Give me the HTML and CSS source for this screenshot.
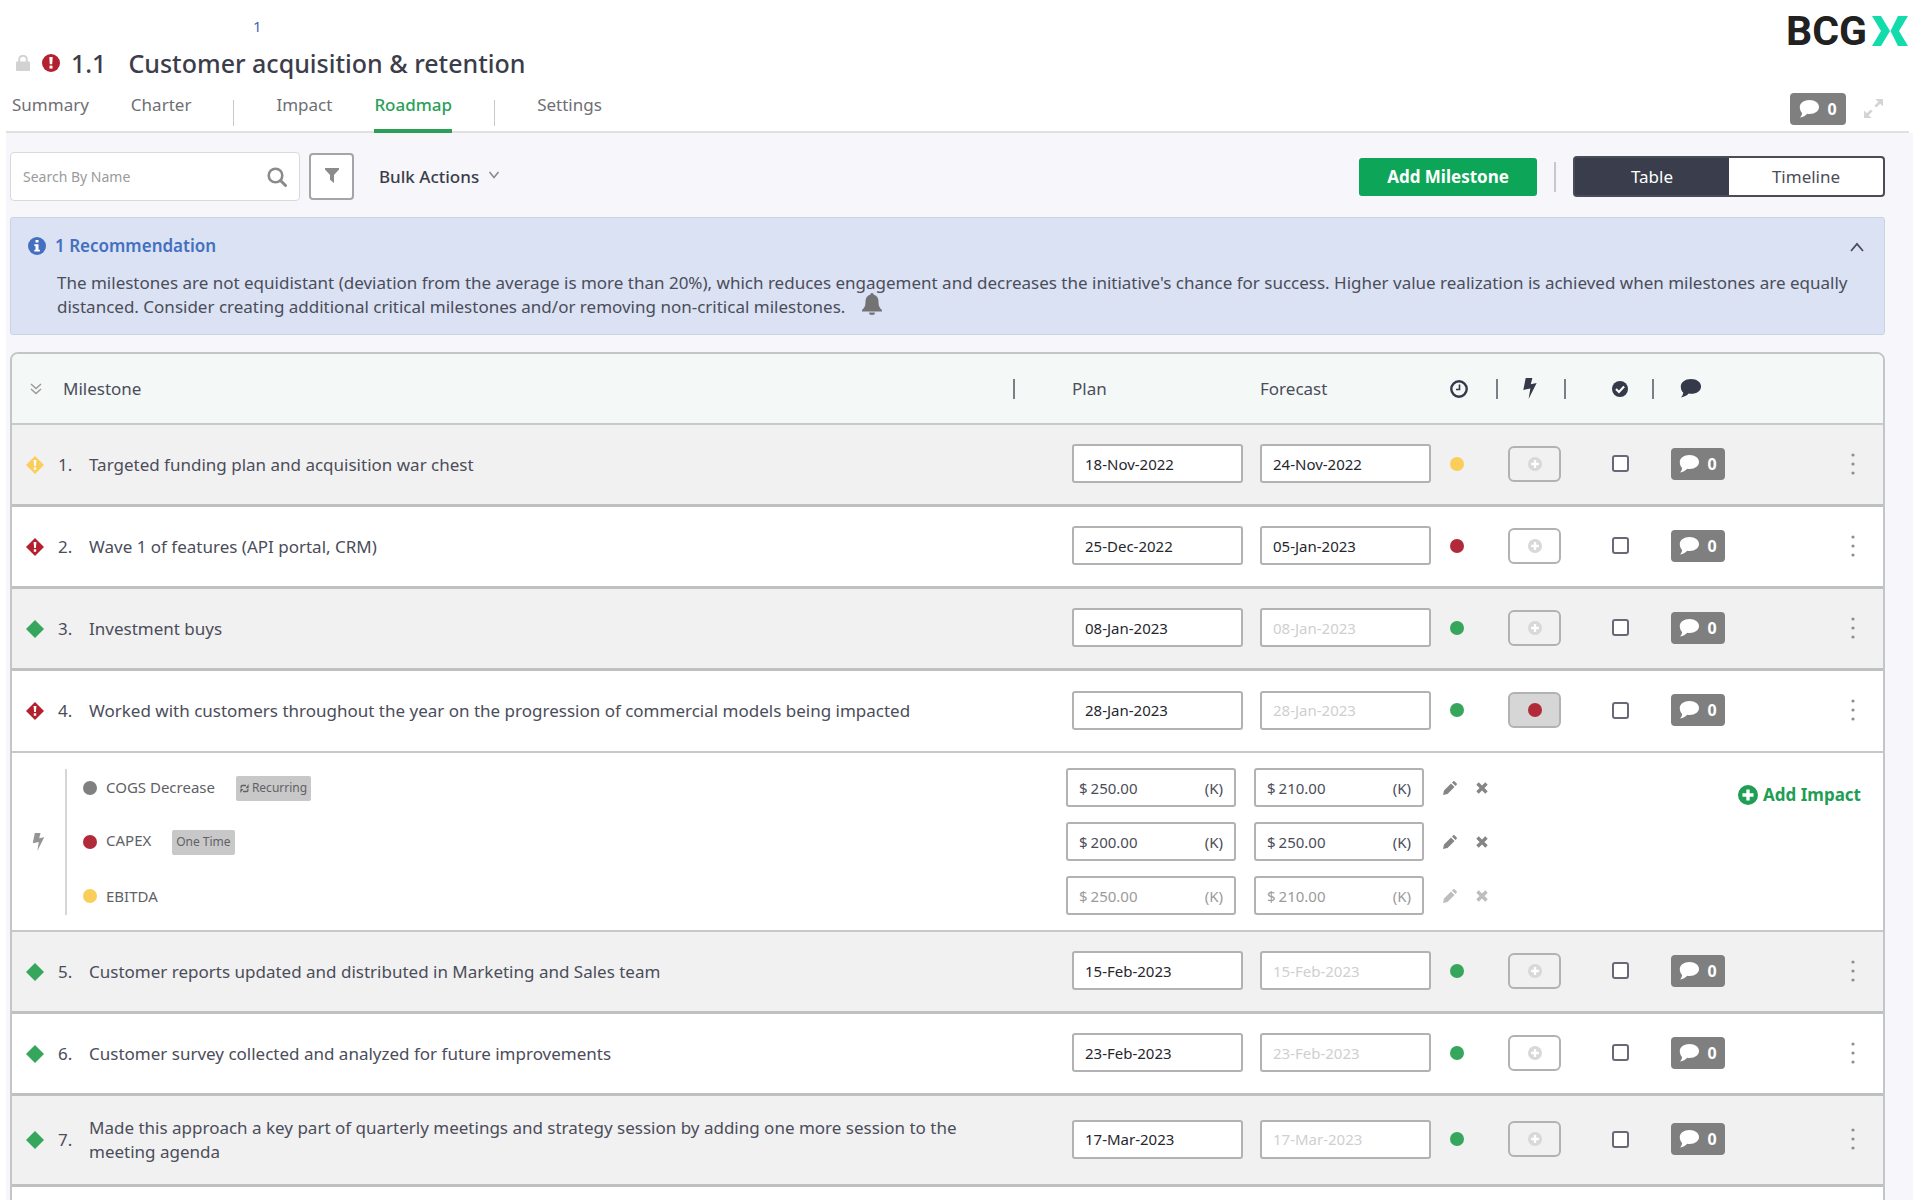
FILE: index.html
```html
<!DOCTYPE html>
<html lang="en">
<head>
    <meta charset="UTF-8">
    <meta name="viewport" content="width=device-width, initial-scale=1.0">
    <title>Customer acquisition &amp; retention</title>
    <link rel="stylesheet" href="styles.css">
</head>
<body>
    <svg class="sprite" aria-hidden="true">
        <symbol id="i-lock" viewBox="0 0 14 16"><path d="M3.200 7V4.500a3.800 3.800 0 0 1 7.600 0V7" fill="none" stroke="currentColor" stroke-width="2"/><rect x="0" y="6.500" width="14" height="9.500" rx="1"/></symbol>
        <symbol id="i-alert" viewBox="0 0 18 18"><circle cx="9" cy="9" r="9"/><path d="M7.300 3h3.400l-.5 7.200H7.800z" fill="#fff"/><rect x="7.500" y="11.600" width="3" height="3" fill="#fff"/></symbol>
        <symbol id="i-search" viewBox="0 0 20 20"><circle cx="8.500" cy="8.500" r="6.800" fill="none" stroke="currentColor" stroke-width="2.600"/><path d="M13.500 13.500l5 5" stroke="currentColor" stroke-width="3" stroke-linecap="round"/></symbol>
        <symbol id="i-filter" viewBox="0 0 14 15"><path d="M0 0h14v1.500L9 7v8l-4-3.200V7L0 1.500z"/></symbol>
        <symbol id="i-down" viewBox="0 0 12 8"><path d="M1.500 1L6 6.500 10.500 1" fill="none" stroke="currentColor" stroke-width="1.600"/></symbol>
        <symbol id="i-up" viewBox="0 0 14 10"><path d="M1 9l6-7 6 7" fill="none" stroke="currentColor" stroke-width="1.800"/></symbol>
        <symbol id="i-double" viewBox="0 0 12 12"><path d="M1 1l5 4.500L11 1M1 6l5 4.500L11 6" fill="none" stroke="currentColor" stroke-width="1.500"/></symbol>
        <symbol id="i-info" viewBox="0 0 18 18"><circle cx="9" cy="9" r="9"/><path d="M7.500 3h3v2.600h-3zM6.300 7.200h4.200v5.600h1.400v1.700H6.300v-1.700h1.200V8.900H6.300z" fill="#fff"/></symbol>
        <symbol id="i-bell" viewBox="0 0 20 22"><path d="M10 0a1.500 1.500 0 0 1 1.500 1.600C14.700 2.300 16.500 5 16.500 8.500c0 4.500 1.200 6.500 3.500 8.500v1.500H0V17c2.300-2 3.500-4 3.500-8.500C3.500 5 5.300 2.300 8.500 1.600A1.500 1.500 0 0 1 10 0zM7 19.500h6a3 2.500 0 0 1-6 0z"/></symbol>
        <symbol id="i-chat" viewBox="0 0 20 18"><path d="M10.500 0C16 0 20 3.100 20 7s-4 7-9.500 7c-.8 0-1.500-.1-2.200-.2C6.500 15.700 4 17 1 17.500c1.200-1.300 2-2.700 2.100-4.600C1.500 11.500.8 9.400.8 7c0-3.900 4.200-7 9.700-7z"/></symbol>
        <symbol id="i-expand" viewBox="0 0 20 20"><path d="M12 0h8v8l-3-3-4 4-2-2 4-4zM8 20H0v-8l3 3 4-4 2 2-4 4z"/></symbol>
        <symbol id="i-clock" viewBox="0 0 18 18"><circle cx="9" cy="9" r="7.700" fill="none" stroke="currentColor" stroke-width="2.400"/><path d="M9.500 4.500v5H6" fill="none" stroke="currentColor" stroke-width="1.600"/></symbol>
        <symbol id="i-bolt" viewBox="0 0 14 22"><path d="M2.500 0h7L7.800 6.500 14 5.300 5.500 22l1.900-11L0 12.500z"/></symbol>
        <symbol id="i-check" viewBox="0 0 18 18"><circle cx="9" cy="9" r="9"/><path d="M4.500 9l3.300 3.300 5.800-6" fill="none" stroke="#fff" stroke-width="2.400"/></symbol>
        <symbol id="i-plus" viewBox="0 0 18 18"><circle cx="9" cy="9" r="9"/><path d="M9 4v10M4 9h10" stroke="#fff" stroke-width="3"/></symbol>
        <symbol id="i-diamond" viewBox="0 0 18 18"><path d="M9 0l9 9-9 9-9-9z"/></symbol>
        <symbol id="i-diamond-alert" viewBox="0 0 18 18"><path d="M9 0l9 9-9 9-9-9z"/><path d="M7.600 4h2.800l-.5 6H8.100zM7.800 11.300h2.400v2.400H7.800z" fill="#fff"/></symbol>
        <symbol id="i-refresh" viewBox="0 0 12 12"><path d="M1.500 5.500V3.500Q1.500 2 3 2h5M10.500 6.500v2q0 1.500-1.500 1.500H4" fill="none" stroke="currentColor" stroke-width="1.700"/><path d="M7.500 5.500L11.500 0v5.500zM4.500 6.500L.5 12V6.500z"/></symbol>
        <symbol id="i-pencil" viewBox="0 0 14 14"><path d="M0 14l1-4.500L8 2.500 11.500 6l-7 7zM9 1.500L10.300.2q.6-.4 1.200.1L13.700 2.500q.5.600 0 1.200L12.500 5z"/></symbol>
        <symbol id="i-times" viewBox="0 0 12 12"><path d="M1.500 1.500l9 9M10.500 1.500l-9 9" stroke="currentColor" stroke-width="3.400"/></symbol>
        <symbol id="i-dots" viewBox="0 0 4 22"><circle cx="2" cy="2" r="1.600"/><circle cx="2" cy="11" r="1.600"/><circle cx="2" cy="20" r="1.600"/></symbol>
    </svg>

    <header class="topbar">
        <div class="heading">
            <a class="parent-link" href="#">1</a>
            <h1>
                <svg class="icon-lock"><use href="#i-lock"/></svg>
                <svg class="icon-18 red"><use href="#i-alert"/></svg>
                <span class="code">1.1</span>
                <span>Customer acquisition &amp; retention</span>
            </h1>
        </div>
        <div class="logo">
            <span>BCG</span>
            <svg viewBox="0 0 36 30"><path d="M0 0h9l9 15-9 15H0l9-15zM36 0H26l-7.500 15L26 30h10l-9-15z"/></svg>
        </div>
    </header>

    <nav class="tabs">
        <a href="#">Summary</a>
        <a href="#">Charter</a>
        <span class="tab-sep"></span>
        <a href="#">Impact</a>
        <a class="active" href="#">Roadmap</a>
        <span class="tab-sep"></span>
        <a href="#">Settings</a>
        <div class="tabs-right">
            <button type="button" class="badge badge-lg"><svg><use href="#i-chat"/></svg>0</button>
            <button type="button" class="plain expand" aria-label="Expand"><svg><use href="#i-expand"/></svg></button>
        </div>
    </nav>

    <main>
        <div class="toolbar">
            <label class="search">
                <input type="text" placeholder="Search By Name" aria-label="Search By Name">
                <svg><use href="#i-search"/></svg>
            </label>
            <button type="button" class="filter" aria-label="Filter"><svg><use href="#i-filter"/></svg></button>
            <button type="button" class="plain bulk">Bulk Actions <svg><use href="#i-down"/></svg></button>
            <button type="button" class="add-milestone">Add Milestone</button>
            <span class="tool-sep"></span>
            <div class="toggle">
                <button type="button" class="on">Table</button>
                <button type="button">Timeline</button>
            </div>
        </div>

        <section class="recommendation">
            <h2>
                <svg class="icon-18"><use href="#i-info"/></svg>
                1 Recommendation
                <button type="button" class="plain collapse" aria-label="Collapse"><svg><use href="#i-up"/></svg></button>
            </h2>
            <p>The milestones are not equidistant (deviation from the average is more than 20%), which reduces engagement and decreases the initiative's chance for success. Higher value realization is achieved when milestones are equally distanced. Consider creating additional critical milestones and/or removing non-critical milestones. <svg class="bell"><use href="#i-bell"/></svg></p>
        </section>

        <div class="table-box">
            <table>
                <colgroup>
                    <col>
                    <col class="c-plan">
                    <col class="c-forecast">
                    <col class="c-status">
                    <col class="c-impact">
                    <col class="c-done">
                    <col class="c-comments">
                    <col class="c-menu">
                </colgroup>
                <thead>
                    <tr>
                        <th class="sep"><div class="name head"><svg class="double"><use href="#i-double"/></svg><span>Milestone</span></div></th>
                        <th class="plan">Plan</th>
                        <th class="forecast">Forecast</th>
                        <th class="status sep"><svg class="icon-18"><use href="#i-clock"/></svg></th>
                        <th class="impact sep"><svg class="icon-bolt"><use href="#i-bolt"/></svg></th>
                        <th class="done sep"><svg class="icon-16"><use href="#i-check"/></svg></th>
                        <th class="comments"><svg class="icon-chat"><use href="#i-chat"/></svg></th>
                        <th></th>
                    </tr>
                </thead>
                <tbody>
                    <tr class="shade">
                        <td><div class="name"><svg class="diamond yellow"><use href="#i-diamond-alert"/></svg><span class="num">1.</span><span>Targeted funding plan and acquisition war chest</span></div></td>
                        <td class="plan"><input class="date" type="text" value="18-Nov-2022" aria-label="Plan 1"></td>
                        <td class="forecast"><input class="date" type="text" value="24-Nov-2022" aria-label="Forecast 1"></td>
                        <td class="status"><span class="dot bg-yellow"></span></td>
                        <td class="impact"><button type="button" class="add" aria-label="Add impact"><svg><use href="#i-plus"/></svg></button></td>
                        <td class="done"><input type="checkbox" aria-label="Done 1"></td>
                        <td class="comments"><button type="button" class="badge"><svg><use href="#i-chat"/></svg>0</button></td>
                        <td class="menu"><button type="button" class="plain" aria-label="Menu"><svg><use href="#i-dots"/></svg></button></td>
                    </tr>
                    <tr>
                        <td><div class="name"><svg class="diamond red"><use href="#i-diamond-alert"/></svg><span class="num">2.</span><span>Wave 1 of features (API portal, CRM)</span></div></td>
                        <td class="plan"><input class="date" type="text" value="25-Dec-2022" aria-label="Plan 2"></td>
                        <td class="forecast"><input class="date" type="text" value="05-Jan-2023" aria-label="Forecast 2"></td>
                        <td class="status"><span class="dot bg-red"></span></td>
                        <td class="impact"><button type="button" class="add" aria-label="Add impact"><svg><use href="#i-plus"/></svg></button></td>
                        <td class="done"><input type="checkbox" aria-label="Done 2"></td>
                        <td class="comments"><button type="button" class="badge"><svg><use href="#i-chat"/></svg>0</button></td>
                        <td class="menu"><button type="button" class="plain" aria-label="Menu"><svg><use href="#i-dots"/></svg></button></td>
                    </tr>
                    <tr class="shade">
                        <td><div class="name"><svg class="diamond green"><use href="#i-diamond"/></svg><span class="num">3.</span><span>Investment buys</span></div></td>
                        <td class="plan"><input class="date" type="text" value="08-Jan-2023" aria-label="Plan 3"></td>
                        <td class="forecast"><input class="date" type="text" placeholder="08-Jan-2023" aria-label="Forecast 3"></td>
                        <td class="status"><span class="dot bg-green"></span></td>
                        <td class="impact"><button type="button" class="add" aria-label="Add impact"><svg><use href="#i-plus"/></svg></button></td>
                        <td class="done"><input type="checkbox" aria-label="Done 3"></td>
                        <td class="comments"><button type="button" class="badge"><svg><use href="#i-chat"/></svg>0</button></td>
                        <td class="menu"><button type="button" class="plain" aria-label="Menu"><svg><use href="#i-dots"/></svg></button></td>
                    </tr>
                    <tr class="open">
                        <td><div class="name"><svg class="diamond red"><use href="#i-diamond-alert"/></svg><span class="num">4.</span><span>Worked with customers throughout the year on the progression of commercial models being impacted</span></div></td>
                        <td class="plan"><input class="date" type="text" value="28-Jan-2023" aria-label="Plan 4"></td>
                        <td class="forecast"><input class="date" type="text" placeholder="28-Jan-2023" aria-label="Forecast 4"></td>
                        <td class="status"><span class="dot bg-green"></span></td>
                        <td class="impact"><button type="button" class="add pressed" aria-label="Hide impacts"><span class="dot bg-red"></span></button></td>
                        <td class="done"><input type="checkbox" aria-label="Done 4"></td>
                        <td class="comments"><button type="button" class="badge"><svg><use href="#i-chat"/></svg>0</button></td>
                        <td class="menu"><button type="button" class="plain" aria-label="Menu"><svg><use href="#i-dots"/></svg></button></td>
                    </tr>
                    <tr class="details">
                        <td colspan="8">
                            <div class="impacts">
                                <svg class="impacts-icon"><use href="#i-bolt"/></svg>
                                <div class="impact-list">
                                    <div class="impact-row">
                                        <span class="dot bg-gray"></span>
                                        <span class="impact-name">COGS Decrease <span class="tag"><svg><use href="#i-refresh"/></svg>Recurring</span></span>
                                        <label class="money">$ <input type="text" value="250.00" aria-label="COGS plan">(K)</label>
                                        <label class="money">$ <input type="text" value="210.00" aria-label="COGS forecast">(K)</label>
                                        <button type="button" class="plain tool" aria-label="Edit"><svg><use href="#i-pencil"/></svg></button>
                                        <button type="button" class="plain tool" aria-label="Remove"><svg class="times"><use href="#i-times"/></svg></button>
                                    </div>
                                    <div class="impact-row">
                                        <span class="dot bg-red"></span>
                                        <span class="impact-name">CAPEX <span class="tag">One Time</span></span>
                                        <label class="money">$ <input type="text" value="200.00" aria-label="CAPEX plan">(K)</label>
                                        <label class="money">$ <input type="text" value="250.00" aria-label="CAPEX forecast">(K)</label>
                                        <button type="button" class="plain tool" aria-label="Edit"><svg><use href="#i-pencil"/></svg></button>
                                        <button type="button" class="plain tool" aria-label="Remove"><svg class="times"><use href="#i-times"/></svg></button>
                                    </div>
                                    <div class="impact-row muted">
                                        <span class="dot bg-yellow"></span>
                                        <span class="impact-name">EBITDA</span>
                                        <label class="money">$ <input type="text" value="250.00" aria-label="EBITDA plan">(K)</label>
                                        <label class="money">$ <input type="text" value="210.00" aria-label="EBITDA forecast">(K)</label>
                                        <button type="button" class="plain tool" aria-label="Edit"><svg><use href="#i-pencil"/></svg></button>
                                        <button type="button" class="plain tool" aria-label="Remove"><svg class="times"><use href="#i-times"/></svg></button>
                                    </div>
                                </div>
                                <button type="button" class="plain add-impact"><svg><use href="#i-plus"/></svg>Add Impact</button>
                            </div>
                        </td>
                    </tr>
                    <tr class="shade">
                        <td><div class="name"><svg class="diamond green"><use href="#i-diamond"/></svg><span class="num">5.</span><span>Customer reports updated and distributed in Marketing and Sales team</span></div></td>
                        <td class="plan"><input class="date" type="text" value="15-Feb-2023" aria-label="Plan 5"></td>
                        <td class="forecast"><input class="date" type="text" placeholder="15-Feb-2023" aria-label="Forecast 5"></td>
                        <td class="status"><span class="dot bg-green"></span></td>
                        <td class="impact"><button type="button" class="add" aria-label="Add impact"><svg><use href="#i-plus"/></svg></button></td>
                        <td class="done"><input type="checkbox" aria-label="Done 5"></td>
                        <td class="comments"><button type="button" class="badge"><svg><use href="#i-chat"/></svg>0</button></td>
                        <td class="menu"><button type="button" class="plain" aria-label="Menu"><svg><use href="#i-dots"/></svg></button></td>
                    </tr>
                    <tr>
                        <td><div class="name"><svg class="diamond green"><use href="#i-diamond"/></svg><span class="num">6.</span><span>Customer survey collected and analyzed for future improvements</span></div></td>
                        <td class="plan"><input class="date" type="text" value="23-Feb-2023" aria-label="Plan 6"></td>
                        <td class="forecast"><input class="date" type="text" placeholder="23-Feb-2023" aria-label="Forecast 6"></td>
                        <td class="status"><span class="dot bg-green"></span></td>
                        <td class="impact"><button type="button" class="add" aria-label="Add impact"><svg><use href="#i-plus"/></svg></button></td>
                        <td class="done"><input type="checkbox" aria-label="Done 6"></td>
                        <td class="comments"><button type="button" class="badge"><svg><use href="#i-chat"/></svg>0</button></td>
                        <td class="menu"><button type="button" class="plain" aria-label="Menu"><svg><use href="#i-dots"/></svg></button></td>
                    </tr>
                    <tr class="shade">
                        <td><div class="name"><svg class="diamond green"><use href="#i-diamond"/></svg><span class="num">7.</span><span>Made this approach a key part of quarterly meetings and strategy session by adding one more session to the meeting agenda</span></div></td>
                        <td class="plan"><input class="date" type="text" value="17-Mar-2023" aria-label="Plan 7"></td>
                        <td class="forecast"><input class="date" type="text" placeholder="17-Mar-2023" aria-label="Forecast 7"></td>
                        <td class="status"><span class="dot bg-green"></span></td>
                        <td class="impact"><button type="button" class="add" aria-label="Add impact"><svg><use href="#i-plus"/></svg></button></td>
                        <td class="done"><input type="checkbox" aria-label="Done 7"></td>
                        <td class="comments"><button type="button" class="badge"><svg><use href="#i-chat"/></svg>0</button></td>
                        <td class="menu"><button type="button" class="plain" aria-label="Menu"><svg><use href="#i-dots"/></svg></button></td>
                    </tr>
                    <tr class="blank"><td colspan="8"></td></tr>
                </tbody>
            </table>
        </div>
    </main>
</body>
</html>
```
FILE: styles.css
```css
* {
    box-sizing: border-box;
}
body {
    display: flex;
    flex-direction: column;
    margin: 0;
    height: 100vh;
    overflow: hidden;
    background: #fff;
    color: #4b4d5a;
    font-family: "Noto Sans", "Open Sans", sans-serif;
    font-size: 17px;
    line-height: 24px;
}
button, input {
    font: inherit;
    color: inherit;
}
button {
    padding: 0;
    cursor: pointer;
}
a {
    color: inherit;
    text-decoration: none;
}
svg {
    fill: currentColor;
    flex: none;
}
.sprite {
    display: none;
}
.plain {
    border: 0;
    background: none;
}
.icon-18 {
    width: 18px;
    height: 18px;
}
.icon-16 {
    width: 16px;
    height: 16px;
}
.red { color: #b3202e; }
.green { color: #35a65c; }
.yellow { color: #fbcd5b; }
.bg-red { background: #b02a3a; }
.bg-green { background: #35a65c; }
.bg-yellow { background: #fbcd5b; }
.bg-gray { background: #808080; }

/* header */
.topbar {
    display: flex;
    flex: none;
    justify-content: space-between;
    padding: 14px 14px 0 15px;
    height: 86px;
}
.parent-link {
    display: block;
    padding-left: 238px;
    font-size: 15px;
    color: #3f68b5;
}
h1 {
    display: flex;
    align-items: center;
    gap: 11px;
    margin: 9px 0 0;
    font-size: 25px;
    line-height: 32px;
    font-weight: 500;
    color: #3b3d4a;
}
.code {
    margin-right: 11px;
}
.icon-lock {
    width: 16px;
    height: 16px;
    color: #d2d2d2;
}
.logo {
    display: flex;
    align-items: center;
    gap: 5px;
    height: 34px;
    font-family: Roboto, sans-serif;
    font-size: 41px;
    font-weight: 700;
    color: #212121;
}
.logo svg {
    width: 36px;
    height: 30px;
    color: #12dcab;
}

/* tabs */
.tabs {
    display: flex;
    flex: none;
    gap: 42px;
    height: 47px;
    margin: 0 13px 0 6px;
    padding: 0 26px 0 6px;
    border-bottom: 2px solid #dfe1e1;
    color: #6e6f74;
}
.tabs a {
    height: 47px;
    padding-top: 7px;
}
.tabs .active {
    color: #2b9f57;
    font-weight: 500;
    border-bottom: 4px solid #2b9f57;
}
.tab-sep {
    width: 1px;
    height: 26px;
    margin-top: 14px;
    background: #c8c8c8;
}
.tabs-right {
    display: flex;
    align-items: center;
    gap: 18px;
    margin-left: auto;
}
.badge {
    display: inline-flex;
    align-items: center;
    justify-content: center;
    gap: 8px;
    width: 54px;
    height: 32px;
    border: 0;
    border-radius: 4px;
    background: #7f7f7f;
    color: #fff;
    font-size: 16px;
    font-weight: 700;
}
.badge svg {
    width: 20px;
    height: 18px;
}
.badge-lg {
    width: 56px;
}
.expand svg {
    display: block;
    width: 19px;
    height: 19px;
    color: #d4d4d4;
}

/* content */
main {
    flex: 1;
    min-height: 0;
    overflow: hidden;
    margin: 0 9px 0 6px;
    padding: 19px 28px 0 4px;
    background: #f6f6fb;
}
.toolbar {
    display: flex;
    align-items: center;
    height: 49px;
}
.search {
    display: flex;
    align-items: center;
    width: 290px;
    height: 49px;
    padding: 0 12px;
    border: 1px solid #d9d9dc;
    border-radius: 4px;
    background: #fff;
    color: #8b8b8b;
    font-size: 14px;
}
.search input {
    flex: 1;
    min-width: 0;
    padding: 0;
    border: 0;
    outline: 0;
    background: none;
}
.search input::placeholder {
    color: #9b9b9b;
}
.search svg {
    width: 20px;
    height: 20px;
}
.filter {
    width: 45px;
    height: 47px;
    margin-left: 9px;
    border: 2px solid #a5a5a8;
    border-radius: 4px;
    background: #fff;
    color: #8b8b8b;
}
.filter svg {
    width: 14px;
    height: 15px;
}
.bulk {
    margin-left: 25px;
    color: #3b3d4a;
    font-weight: 500;
}
.bulk svg {
    width: 12px;
    height: 8px;
    margin: 0 0 4px 4px;
    color: #8b8b8b;
}
.add-milestone {
    width: 178px;
    height: 38px;
    margin-left: auto;
    border: 0;
    border-radius: 3px;
    background: #0da658;
    color: #fff;
    font-weight: 700;
}
.tool-sep {
    width: 2px;
    height: 30px;
    margin: 0 17px;
    background: #c8c8c8;
}
.toggle {
    display: flex;
    width: 312px;
    height: 41px;
    border: 2px solid #4a4c58;
    border-radius: 4px;
    background: #fff;
}
.toggle button {
    flex: 1;
    border: 0;
    background: none;
}
.toggle .on {
    background: #393d4c;
    color: #fff;
}
.recommendation {
    margin-top: 16px;
    padding: 16px 2px 15px 17px;
    border: 1px solid #c9d3e6;
    border-radius: 3px;
    background: #dae2f3;
}
.recommendation h2 {
    display: flex;
    align-items: center;
    gap: 9px;
    margin: 0;
    font-size: 17px;
    font-weight: 600;
    color: #4470bf;
}
.collapse {
    margin-left: auto;
    margin-right: 18px;
    color: #4b4d5a;
}
.collapse svg {
    width: 14px;
    height: 10px;
}
.recommendation p {
    margin: 13px 0 0;
    padding-left: 29px;
}
.bell {
    width: 20px;
    height: 22px;
    margin: -6px 0 0 12px;
    vertical-align: -2px;
    color: #737373;
}

/* milestones */
.table-box {
    margin-top: 17px;
    border: 2px solid #c3c6c6;
    border-radius: 8px 8px 0 0;
    overflow: hidden;
    background: #fff;
}
table {
    width: 100%;
    table-layout: fixed;
    border-collapse: separate;
    border-spacing: 0;
}
.c-plan { width: 229px; }
.c-forecast { width: 188px; }
.c-status { width: 66px; }
.c-impact { width: 68px; }
.c-done { width: 88px; }
.c-comments { width: 86px; }
.c-menu { width: 143px; }
th {
    height: 71px;
    padding: 0;
    border-bottom: 2px solid #c8cbcb;
    background: #f4f8f7;
    font-weight: 400;
    text-align: left;
}
th svg {
    display: block;
    color: #353a4a;
}
.sep {
    background-image: linear-gradient(#7d7f86, #7d7f86);
    background-repeat: no-repeat;
    background-position: right center;
    background-size: 2px 20px;
}
td {
    height: 82px;
    padding: 0 0 2px;
    border-bottom: 3px solid #bfc1c1;
    text-align: left;
}
td:first-child {
    padding-bottom: 0;
}
.plan { padding-left: 57px; }
.forecast { padding-left: 16px; }
.status { padding-left: 18px; }
td.impact { padding-left: 10px; }
th.impact { padding-left: 25px; }
.done { padding-left: 46px; }
td.comments { padding-left: 17px; }
th.comments { padding-left: 25px; }
.shade td {
    background: #f1f1f1;
}
.open td {
    border-bottom: 2px solid #c8c8c8;
}
.details td {
    height: 179px;
    border-bottom: 2px solid #c8c8c8;
}
.blank td {
    border-bottom: 0;
}
.name {
    display: flex;
    align-items: center;
    padding: 20px 32px 20px 14px;
}
.head {
    padding-left: 18px;
    gap: 21px;
}
.double {
    width: 12px;
    height: 12px;
}
th .double {
    color: #9b9b9b;
}
.diamond {
    width: 18px;
    height: 18px;
}
.num {
    width: 31px;
    margin-left: 14px;
    flex: none;
}
.icon-bolt {
    width: 14px;
    height: 21px;
}
.icon-chat {
    width: 23px;
    height: 19px;
}
.date {
    display: block;
    width: 171px;
    height: 39px;
    padding: 0 11px;
    border: 2px solid #b2b2b2;
    border-radius: 3px;
    background: #fff;
    color: #26272e;
    font-size: 15px;
}
.date::placeholder {
    color: #cfcfcf;
}
.dot {
    display: block;
    flex: none;
    width: 14px;
    height: 14px;
    border-radius: 50%;
}
.add {
    display: flex;
    align-items: center;
    justify-content: center;
    width: 53px;
    height: 36px;
    border: 2px solid #b2b2b2;
    border-radius: 6px;
    background: none;
    color: #d8d8d8;
}
.add svg {
    width: 14px;
    height: 14px;
}
.pressed {
    background: #d6d6d6;
}
input[type="checkbox"] {
    display: block;
    appearance: none;
    width: 17px;
    height: 17px;
    margin: 0;
    border: 2px solid #6a6878;
    border-radius: 3px;
    background: #fff;
}
.menu button {
    display: block;
    margin-left: auto;
    margin-right: 28px;
    color: #8e8e8e;
}
.menu svg {
    display: block;
    width: 4px;
    height: 22px;
}

/* impacts of an opened milestone */
.impacts {
    display: flex;
    align-items: center;
    font-size: 15px;
}
.impacts-icon {
    width: 13px;
    height: 18px;
    margin: 0 20px 0 20px;
    color: #949494;
}
.impact-list {
    flex: 1;
    border-left: 2px solid #d6d6d6;
}
.impact-row {
    display: flex;
    align-items: center;
    gap: 18px;
    height: 54px;
    padding-left: 16px;
}
.impact-row:first-child,
.impact-row:last-child {
    height: 46px;
}
.impact-row:first-child {
    padding-bottom: 8px;
}
.impact-row:last-child {
    padding-top: 8px;
}
.impact-name {
    width: 942px;
    color: #606166;
}
.dot + .impact-name {
    margin-left: -9px;
}
.tag {
    display: inline-flex;
    align-items: center;
    gap: 3px;
    height: 25px;
    margin-left: 17px;
    padding: 0 4px;
    border-radius: 2px;
    background: #c8c8c8;
    font-size: 12px;
}
.tag svg {
    width: 9px;
    height: 9px;
}
.money {
    display: flex;
    align-items: center;
    gap: 3px;
    width: 170px;
    height: 39px;
    padding: 0 11px;
    border: 2px solid #b2b2b2;
    border-radius: 3px;
    background: #fff;
}
.money input {
    flex: 1;
    min-width: 0;
    padding: 0;
    border: 0;
    outline: 0;
    background: none;
}
.tool {
    margin-left: 1px;
}
.tool svg {
    display: block;
    width: 14px;
    height: 14px;
    color: #858585;
}
.tool svg.times {
    width: 12px;
    height: 12px;
}
.muted .money,
.muted .tool {
    color: #9b9b9b;
}
.muted .tool svg {
    color: #bdbdbd;
}
.add-impact {
    display: flex;
    align-items: center;
    align-self: flex-start;
    gap: 5px;
    margin: 14px 22px 0 0;
    color: #1f9e55;
    font-size: 17px;
    font-weight: 700;
}
.add-impact svg {
    width: 20px;
    height: 20px;
}
```
